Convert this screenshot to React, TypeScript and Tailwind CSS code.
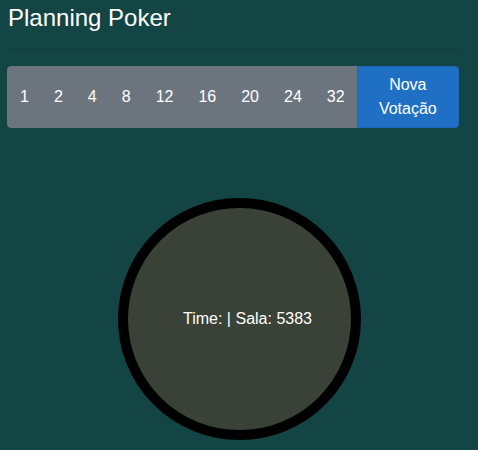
const CARDS = ["1", "2", "4", "8", "12", "16", "20", "24", "32"];

export default function App() {
  return (
    <div className="min-h-[450px] w-full bg-[#144545] font-['Liberation_Sans',Arial,sans-serif] text-white">
      <div className="px-[7px] pt-[4px]">
        <h4 className="pl-[1px] text-[24px] leading-[28.8px] font-normal">Planning Poker</h4>
        <hr className="mt-[16px] mb-[16px] w-[452px] border-t border-black/10" />
        <div className="flex w-[452px]">
          {CARDS.map((c, i) => (
            <button
              key={c}
              type="button"
              className={`-ml-px h-[62px] border border-[#6c757d] bg-[#6c757d] px-3 text-[16px] leading-6 text-white first:ml-0 ${
                i === 0 ? "rounded-l-[4px]" : ""
              }`}
            >
              {c}
            </button>
          ))}
          <button
            type="button"
            className="-ml-px flex-1 rounded-r-[4px] border border-[#1c67b8] bg-[#1f6fc5] px-3 py-[6px] text-[16px] leading-6 text-white"
          >
            Nova
            <br />
            Votação
          </button>
        </div>
      </div>
      <div className="mt-[70px] flex justify-center">
        <div className="flex h-[242px] w-[243px] items-center justify-center rounded-full border-[10px] border-black bg-[#3a4237] pl-[17px]">
          <span className="text-[16px] leading-6">Time: | Sala: 5383</span>
        </div>
      </div>
    </div>
  );
}
